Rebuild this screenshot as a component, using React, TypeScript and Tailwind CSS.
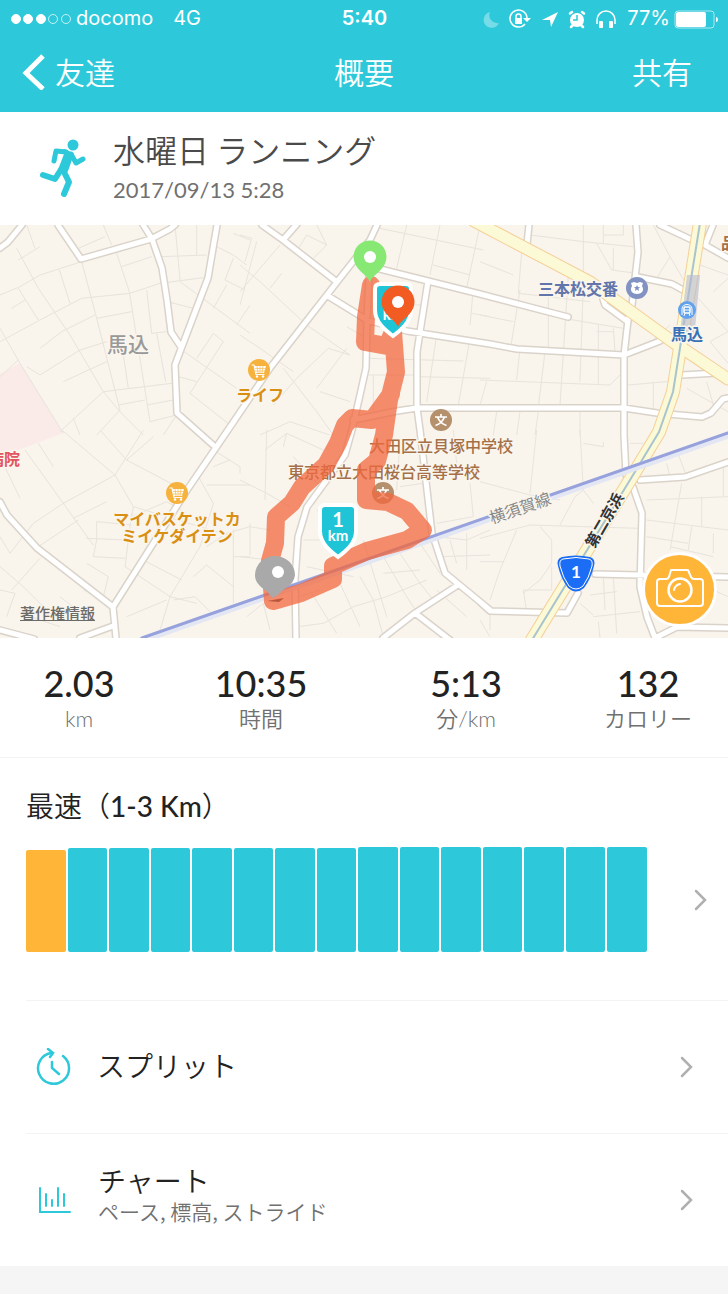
import React from "react";

const latin = "font-[Lato,'Noto_Sans_CJK_JP',sans-serif]";

const stats: { value: string; unit: string }[] = [
  { value: "2.03", unit: "km" },
  { value: "10:35", unit: "時間" },
  { value: "5:13", unit: "分/km" },
  { value: "132", unit: "カロリー" },
];

const paceBars = [
  102, 104, 104, 104, 104, 104, 104, 104, 105, 105, 105, 105, 105, 105, 105,
];

const roads = [
  "M22 0L8 17L0 23",
  "M58 0L81 34L151 14L170 4L175 0",
  "M142 -2L152 14L162 43L167 75L171 107L181 122",
  "M217 0L208 53L181 124L175 140L177 188L213 220",
  "M377 0L370 15L337 57L270 143L228 205L187 265L113 382L116 413",
  "M370 17L372 45",
  "M0 277L7 290L37 323L113 382",
  "M0 405L34 414",
  "M80 413L113 401",
  "M262 0L283 15L337 57",
  "M283 15L297 -1",
  "M328 71L367 95L407 106L490 119L517 124L624 130L660 116",
  "M372 42L428 56L480 69L568 92",
  "M369 50L367 95L366 143L360 170L352 205L345 230L307 282L298 312L295 355L296 413",
  "M428 56L420 107L417 127L417 183L420 205L432 308L445 348L490 385",
  "M383 413L415 388L458 360",
  "M415 388L450 415",
  "M353 195L397 186L417 183L624 183L657 188L702 192L711 188L723 174L728 173",
  "M636 0L638 27L632 80L628 95L624 130L624 210L626 250",
  "M603 74L605 80L628 97",
  "M527 19L529 0",
  "M660 0L692 15L705 20L728 33",
  "M713 0L705 20",
  "M638 52L672 59L683 65",
  "M682 150L717 148",
  "M640 255L685 252L728 237",
  "M633 262L642 288L640 362L647 392L655 413",
  "M595 349L728 352",
  "M480 377L490 386L567 388L578 368",
  "M655 413L677 402L728 403",
];

// back streets, one group of lines per map tile
const tiles: { x: number; y: number; d: string }[] = [
  {
    x: 0,
    y: 0,
    d: "M50 70L115 190L210 330L310 500L360 560L430 630M0 210L60 185L120 150L245 110M0 310L60 415L190 625M0 350L120 285L245 220L390 205L480 175L610 158M245 110L290 280L360 555L290 630M120 370L185 320L285 270M290 280L395 260M350 85L388 200L450 590M365 125L455 95M485 95L620 90M525 0L540 165M80 425L120 450L240 375L320 350M190 470L320 410M310 500L515 475M440 195L455 325L500 320M470 325L497 470M370 390L385 490M178 135L210 235M510 232L580 250M540 170L750 325M545 375L710 490M570 505L670 350L640 325M590 400L640 325M700 100L675 165L735 195M680 180L640 250M650 65L700 90L740 120M590 0V90M535 455L590 470M355 540L435 525M440 540L520 525M450 590L530 570L490 630M310 500L180 620M0 455L55 405M55 105L120 65M235 70L315 35M310 0L335 60M80 0L105 70M55 190L115 285M35 250L75 225M700 25L750 45M220 580L240 630M570 505L690 600M750 240L710 300",
  },
  {
    x: 240,
    y: 0,
    d: "M0 120L60 170L200 300L330 390M0 330L60 370L160 440M50 50L0 240M0 30L35 40L15 110M90 190L125 145M170 80L200 30L260 60M230 0L260 60L210 110M500 0L470 130M600 0L570 150M420 10L730 75M580 120L690 150M720 0L680 190M700 190L690 300M695 265L750 275M380 400L670 408M530 455L750 460M385 450H530M690 340L655 540M590 330L560 530M170 460L265 370L330 390M130 430L230 560L280 630M100 540L170 460M320 370L230 490M320 305L380 340M60 630L150 590L270 630M500 240H560M400 450V560M0 200L120 60M240 500L330 530",
  },
  {
    x: 480,
    y: 0,
    d: "M0 110L100 150M370 0V55M310 0V170L300 470M150 30L310 50L460 65M350 55L395 135L470 145M400 70V135M120 195L90 380M125 80L115 205L330 230M205 180V370M265 150L240 540M250 280L430 310M355 300V480M0 465L390 480L430 440M120 370L110 465M195 380L175 545M520 0L570 95L620 180M570 95L530 160M0 270L100 290M350 320H400M400 310L405 380M445 480L560 470L660 450M520 470V560M300 560V630M175 560L165 630M120 560L110 630M50 560L40 630M660 120L744 150M655 220L744 320L690 350L744 415M680 470L700 540M620 490L744 560M370 30H430V0M20 470L0 540M570 300L480 380M700 200L744 160",
  },
  {
    x: 0,
    y: 205,
    d: "M115 40L160 110M75 60L190 220L265 325L280 345M0 80L60 205M185 0L345 135L400 230L700 320M300 0L380 90L560 185M430 0L345 135L190 220L100 280M400 230L395 260L500 215L560 250M395 250L375 410L510 500L590 520M220 265L320 215M290 275V330L280 380L375 385M290 275L395 285M260 325L375 330M510 500L600 350L640 220L590 130M510 500L480 600M520 510L585 500L630 545M545 450L420 385M260 400L325 440L310 500L250 480M100 360L235 270M0 320L30 370L100 280M35 480L120 385M0 480L45 490L20 560M0 410L70 470L150 550M580 440L620 405L700 470M700 300V520M700 380H750M620 165H750M640 60L720 110V130M620 350L680 310L750 290M640 110L690 90M60 550L180 590M180 500L230 540M380 560L500 510M380 90L460 20",
  },
  {
    x: 240,
    y: 205,
    d: "M0 150L80 190L150 230M80 0L75 210M75 60L140 10L250 60M140 10L130 50M160 80L250 180M0 380L90 390M30 280V375M30 290L90 300M230 240L300 260M190 330H330M200 410L340 440M370 330L440 560M430 380L500 500L560 590M480 370L540 460L580 510M540 340L600 430M300 460L360 590M215 490L290 610M175 590L250 580L340 530L440 500M360 440L400 510L430 620M430 430L540 420M440 500L560 450M590 320L680 330L750 300M680 310V420M600 380L750 375M630 330L650 400M480 30L470 180M480 170L550 160M340 240L330 340M640 0L650 100M690 160L700 260L590 280M90 600L70 520L20 560M240 480L175 500M590 480L680 560",
  },
  {
    x: 480,
    y: 205,
    d: "M170 0L150 190M0 155L150 195L240 210M300 0L310 180L340 220M310 40L370 50V35M310 180L285 200L240 285M0 325L150 285L475 295M110 300L60 420L30 510M180 290L215 330V400L180 450L130 490M0 395H70M130 480L215 480V410M130 480L140 545M370 440L375 540M400 440L410 610M330 495L410 485M340 560L480 545M300 520L340 555M500 210L744 200M500 270L744 300M605 160L570 360M665 200V290M570 350L700 380M635 290L625 360M500 320L625 340M700 310V370M730 100V200M445 50L430 120M450 40H490M560 100L570 140M700 480L744 500M590 60L620 140M0 570L30 620M355 575L360 625M210 560L180 625M30 550V600",
  },
];

const highway = "M700 -2L680 123L673 167L659 207L630 255L532 415";
const avenue = "M474 -4L590 57L673 117L728 154";

const track =
  "M371 60L366 92L365 117L387 121L393 107L396 147L389 175L384 210L377 236L366 245L366 275L388 277L407 286L423 305L407 315L367 326L333 341L333 354L301 368L273 376L270 336L275 318L276 292L292 278L302 262L326 240L338 218L345 200L352 193L372 195L391 169";

const Halo: React.FC<React.SVGProps<SVGTextElement>> = (props) => (
  <text
    textAnchor="middle"
    stroke="#faf6ee"
    strokeWidth="3"
    strokeLinejoin="round"
    paintOrder="stroke"
    {...props}
  />
);

const Cart = ({ x, y }: { x: number; y: number }) => (
  <g transform={`translate(${x} ${y})`}>
    <circle r="11" fill="#f6b23c" />
    <path d="M-5 -4H7L5 3H-3Z" fill="#fff" />
    <path
      d="M-7 -5H-5L-3 4.500H5"
      stroke="#fff"
      strokeWidth="1.200"
      fill="none"
      strokeLinecap="round"
    />
    <path
      d="M-2 -4L-1 3M1 -4V3M4 -4L3 3M-4 -1.500H6M-4 1H6"
      stroke="#f6b23c"
      strokeWidth=".6"
    />
    <circle cx="-2" cy="6.500" r="1.200" fill="#fff" />
    <circle cx="4" cy="6.500" r="1.200" fill="#fff" />
  </g>
);

const School = ({ x, y }: { x: number; y: number }) => (
  <g transform={`translate(${x} ${y})`}>
    <circle r="11" fill="#b5906c" />
    <path
      d="M0 -6V-3M-6 -3H6M-3.500 -3C-2 1 1 4 5.500 5.500M3.500 -3C2 1 -1 4 -5.500 5.500"
      stroke="#fff"
      strokeWidth="1.700"
      fill="none"
    />
  </g>
);

const Pin = ({ x, y, fill }: { x: number; y: number; fill: string }) => (
  <g transform={`translate(${x} ${y})`}>
    <path
      d="M0 25C-3 17 -16 13 -16.500 0A16.500 16.500 0 0 1 16.500 0C16 13 3 17 0 25Z"
      fill={fill}
    />
    <circle r="6" fill="#fff" />
  </g>
);

const KmShield = ({ x, y }: { x: number; y: number }) => (
  <g transform={`translate(${x} ${y})`}>
    <path
      d="M-13 -26H13Q18 -26 18 -21V0C18 12 8 20 0 26C-8 20 -18 12 -18 0V-21Q-18 -26 -13 -26Z"
      fill="#1fc5d6"
      stroke="#fff"
      strokeWidth="4"
    />
    <text textAnchor="middle" fill="#fff" fontWeight="700">
      <tspan x="0" y="-4" fontSize="20">
        1
      </tspan>
      <tspan x="0" y="10" fontSize="15">
        km
      </tspan>
    </text>
  </g>
);

const RouteMap = () => (
  <div className="relative">
    <svg
      viewBox="0 0 728 413"
      className={`block h-auto w-full bg-[#f9f4ec] ${latin}`}
      role="img"
      aria-label="ランニングルート"
    >
      <path d="M0 149L20 138L63 208L0 232Z" fill="#fbebe8" />
      {tiles.map((tile) => (
        <svg
          key={`${tile.x}-${tile.y}`}
          x={tile.x}
          y={tile.y}
          width="250"
          height="210"
          viewBox="0 0 750 630"
        >
          <path d={tile.d} fill="none" stroke="#e7e4dd" strokeWidth="3" />
        </svg>
      ))}
      <g fill="none" strokeLinejoin="round" strokeLinecap="round">
        <path d={roads.join("")} stroke="#dad3ca" strokeWidth="8" />
        <path d={roads.join("")} stroke="#fff" strokeWidth="5" />
        <path d={avenue} stroke="#f5cf98" strokeWidth="13" />
        <path d={highway} stroke="#f5cf98" strokeWidth="14" />
        <path d={avenue} stroke="#fcfad6" strokeWidth="11" />
        <path d={highway} stroke="#fcfad6" strokeWidth="12" />
        <path d={highway} stroke="#a9c3cf" strokeWidth="2" />
        <path d="M142 415L728 210" stroke="#e3e7f4" strokeWidth="7" />
        <path d="M142 413L728 208" stroke="#97a1dc" strokeWidth="3" />
      </g>
      <path d="M687 50H700L694 115H679Z" fill="#b5b9cf" opacity=".6" />

      <g fontWeight="700" fontSize="16">
        <Halo x="128" y="127" fontSize="21" fontWeight="500" fill="#999">
          馬込
        </Halo>
        <Halo x="260" y="176" fill="#d98f13">
          ライフ
        </Halo>
        <Halo x="177" y="300" fill="#d98f13">
          マイバスケットカ
        </Halo>
        <Halo x="177" y="317" fill="#d98f13">
          ミイケダイテン
        </Halo>
        <Halo x="578" y="70" fill="#6275ab">
          三本松交番
        </Halo>
        <Halo x="687" y="115" fill="#3a70b5">
          馬込
        </Halo>
        <Halo x="-12" y="240" textAnchor="start" fill="#e25560">
          病院
        </Halo>
        <Halo x="721" y="24" textAnchor="start" fill="#a57048">
          品
        </Halo>
        <Halo
          x="520"
          y="289"
          fontWeight="400"
          fill="#888"
          transform="rotate(-19 520 283)"
        >
          横須賀線
        </Halo>
        <Halo x="604" y="301" fontSize="15" fill="#333" transform="rotate(-60 604 295)">
          第二京浜
        </Halo>
        <Halo x="441" y="227" fontWeight="500" fill="#a57048">
          大田区立貝塚中学校
        </Halo>
        <Halo x="384" y="253" fontWeight="500" fill="#a57048">
          東京都立大田桜台高等学校
        </Halo>
      </g>
      <Cart x={259} y={145} />
      <Cart x={177} y={268} />
      <School x={441} y={195} />
      <School x={383} y={268} />

      <g transform="translate(637 63)">
        <circle r="11" fill="#8292c2" />
        <path
          d="M-6 -5L-3 -6L0 -5L3 -6L6 -5L5 -2C8 3 4 6 0 6C-4 6 -8 3 -5 -2Z"
          fill="#fff"
        />
        <path
          d="M0 -3L1 -1H3L1.500 .5L2 3L0 1.500L-2 3L-1.500 .5L-3 -1H-1Z"
          fill="#8292c2"
        />
      </g>
      <g transform="translate(687 85)" fill="none" stroke="#fff">
        <circle r="9" fill="#62a2ec" stroke="none" />
        <path d="M-5 5V-1C-5 -7 5 -7 5 -1V5" />
        <rect x="-3" y="-3" width="6" height="6" rx="1" strokeWidth="1.500" />
        <path d="M-3 0H3M-2 3L-3 6M2 3L3 6" />
      </g>
      <g transform="translate(576 349)">
        <path
          d="M-14 -17Q0 -20 14 -17Q20 -15 18 -8Q15 5 8 14Q0 21 -8 14Q-15 5 -18 -8Q-20 -15 -14 -17Z"
          fill="#1b6df5"
        />
        <path
          d="M-13 -15Q0 -18 13 -15Q17 -14 16 -8Q13 4 7 12Q0 18 -7 12Q-13 4 -16 -8Q-17 -14 -13 -15Z"
          fill="none"
          stroke="#fff"
        />
        <text y="4" textAnchor="middle" fill="#fff" fontSize="17" fontWeight="700">
          1
        </text>
      </g>

      <path
        d={track}
        fill="none"
        stroke="#f1683f"
        strokeOpacity=".75"
        strokeWidth="18"
        strokeLinejoin="round"
        strokeLinecap="round"
      />

      <Pin x={370} y={32} fill="#88e874" />
      <KmShield x={393} y={85} />
      <Pin x={398} y={77} fill="#f25c22" />
      <KmShield x={338} y={306} />
      <g>
        <path d="M267 376L284 373L279 377Z" fill="#b9573c" />
        <path
          d="M255 350A20 19 0 0 1 295 350C294 360 284 363 278 370L272 373C268 364 255 362 255 350Z"
          fill="#a9a9a9"
        />
        <circle cx="278" cy="347" r="6" fill="#fff" />
      </g>
    </svg>
    <a
      href="#legal"
      className="absolute bottom-3.5 left-5 text-[15px] leading-[22px] font-medium text-[#6b6b68] underline"
    >
      著作権情報
    </a>
    <button
      type="button"
      aria-label="写真を撮る"
      className="absolute right-[11px] bottom-[11px] flex size-[75px] cursor-pointer items-center justify-center rounded-full border-[3px] border-white bg-[#ffb538]"
    >
      <svg
        width="50"
        height="42"
        viewBox="0 0 50 42"
        fill="none"
        stroke="#fff"
        strokeWidth="2"
        strokeLinejoin="round"
      >
        <path d="M5 10H11Q13 10 14 8L16 1H33L36 8Q37 10 39 10H45Q48 10 48 13V34Q48 37 45 37H5Q2 37 2 34V13Q2 10 5 10Z" />
        <circle cx="25" cy="21" r="11.500" strokeWidth="2.500" />
        <path d="M19 21Q20 16 25 15" strokeLinecap="round" />
      </svg>
    </button>
  </div>
);

const StatusBar = () => (
  <div className="grid grid-cols-[1fr_auto_1fr] items-center pr-2.5 pl-[11px] font-[Inter,sans-serif] text-[20px] leading-[37px]">
    <div className="flex items-center">
      <svg width="60" height="12" viewBox="0 0 60 12" fill="none" stroke="#fff">
        <g fill="#fff">
          <circle cx="5" cy="6" r="4.500" />
          <circle cx="17" cy="6" r="4.500" />
          <circle cx="30" cy="6" r="4.500" />
        </g>
        <circle cx="42" cy="6" r="4.500" strokeOpacity=".7" />
        <circle cx="55" cy="6" r="4.500" strokeOpacity=".7" />
      </svg>
      <span className="ml-[5px]">docomo</span>
      <span className="ml-5">4G</span>
    </div>
    <div className="font-semibold">5:40</div>
    <div className="flex items-center justify-end">
      <svg width="138" height="22" viewBox="0 0 138 22" fill="#fff" className="mr-2">
        <path
          d="M9 4A8 8 0 1 0 18 15A8 8 0 0 1 9 4Z"
          fillOpacity=".35"
        />
        <g fill="none" stroke="#fff" strokeWidth="1.500">
          <path d="M44 16A8.500 8.500 0 1 1 46 10" />
          <path d="M35 10V8.500A2 2 0 0 1 40 8.500V10" />
        </g>
        <path d="M34 10H41V16H34ZM42 10H50L46 14Z" />
        <path d="M61 12L77 4L70 19L69 12Z" />
        <circle cx="96" cy="12" r="7" />
        <path
          d="M89 5.500L91 4M103 5.500L101 4M92 17L90 19M100 17L102 19"
          stroke="#fff"
          strokeWidth="2.500"
          strokeLinecap="round"
        />
        <path d="M96 7V12H92" fill="none" stroke="#2dc9da" strokeWidth="1.500" />
        <path
          d="M116 16V12A9 9 0 0 1 134 12V16"
          fill="none"
          stroke="#fff"
          strokeWidth="1.500"
        />
        <rect x="118" y="13" width="4" height="7" rx="1" />
        <rect x="128" y="13" width="4" height="7" rx="1" />
      </svg>
      <span>77%</span>
      <svg width="44" height="20" viewBox="0 0 44 20" className="ml-1">
        <rect
          x="1"
          y="2"
          width="39"
          height="17"
          rx="3"
          fill="none"
          stroke="#fff"
          strokeOpacity=".6"
        />
        <rect x="2" y="3" width="30" height="15" rx="2" fill="#fff" />
        <path d="M42 8Q44 8 44 10.500Q44 13 42 13Z" fill="#fff" />
      </svg>
    </div>
  </div>
);

const Chevron = () => (
  <svg
    width="14"
    height="22"
    viewBox="0 0 14 22"
    fill="none"
    stroke="#b0b0b0"
    strokeWidth="2.500"
    strokeLinecap="round"
    className="shrink-0"
  >
    <path d="M2 2L11 11L2 20" />
  </svg>
);

const Runner = () => (
  <svg
    width="48"
    height="60"
    viewBox="0 0 48 60"
    fill="none"
    stroke="#2dc9da"
    strokeWidth="5"
    strokeLinecap="round"
    strokeLinejoin="round"
  >
    <circle cx="33" cy="6" r="5.500" fill="#2dc9da" stroke="none" />
    <path d="M14 22L16 12L26 13" />
    <path d="M31 15L36 24L43 20" />
    <path
      d="M24 11L33 15L27 32L19 31L25 15Z"
      fill="#2dc9da"
      strokeWidth="2"
    />
    <path d="M22 29L15 40L3 36" strokeWidth="6" />
    <path d="M23 31L29 43L24 55" strokeWidth="6" />
  </svg>
);

const App: React.FC = () => {
  return (
    <div className="flex min-h-screen flex-col bg-white font-['Noto_Sans_CJK_JP',sans-serif] text-[#222]">
      <header className="bg-[#2dc9da] pb-[7px] text-white">
        <StatusBar />
        <nav className="grid grid-cols-[1fr_auto_1fr] items-center px-[22px] text-[30px] leading-[68px] font-[350]">
          <button
            type="button"
            className="flex cursor-pointer items-center gap-2.5 justify-self-start"
          >
            <svg
              width="23"
              height="38"
              viewBox="0 0 23 38"
              fill="none"
              stroke="#fff"
              strokeWidth="5"
            >
              <path d="M21 4L4 21L21 37" />
            </svg>
            友達
          </button>
          <h1>概要</h1>
          <button
            type="button"
            className="cursor-pointer justify-self-end pr-3.5"
          >
            共有
          </button>
        </nav>
      </header>

      <section className="flex items-end gap-[25px] pt-4 pb-[19px] pl-10">
        <div className="pb-[7px]">
          <Runner />
        </div>
        <div>
          <h2 className="text-[32px] leading-[42px] font-[350] text-[#4a4a4a]">
            水曜日 ランニング
          </h2>
          <p className={`pt-1 text-[22px] leading-8 text-[#707070] ${latin}`}>
            2017/09/13 5:28
          </p>
        </div>
      </section>

      <RouteMap />

      <section className="grid grid-cols-[158fr_206fr_204fr_160fr] border-b border-[#f3f3f3] pt-6 pb-6 text-center">
        {stats.map((item) => (
          <div key={item.unit}>
            <div className={`text-[36px] leading-[43px] font-medium ${latin}`}>
              {item.value}
            </div>
            <div
              className={`text-[22px] leading-[28px] font-[350] text-[#707070] ${latin}`}
            >
              {item.unit}
            </div>
          </div>
        ))}
      </section>

      <section className="pt-7 pl-[26px]">
        <h3 className={`text-[28px] leading-10 font-medium ${latin}`}>
          <span className="font-[350]">最速（</span>1-3 Km
          <span className="font-[350]">）</span>
        </h3>
        <button
          type="button"
          aria-label="最速の詳細"
          className="mt-[21px] flex w-full cursor-pointer items-center gap-[47px] pr-5 pb-12"
        >
          <div className="flex flex-1 items-end gap-0.5">
            {paceBars.map((height, index) => (
              <div
                key={index}
                style={{ height }}
                className={`flex-1 rounded-xs ${index === 0 ? "bg-[#ffb538]" : "bg-[#2dc9da]"}`}
              ></div>
            ))}
          </div>
          <Chevron />
        </button>
      </section>

      <button
        type="button"
        className="ml-[26px] flex h-[133px] cursor-pointer items-center border-t border-[#f3f3f3] pr-[34px] pl-2.5 text-left"
      >
        <svg
          width="36"
          height="38"
          viewBox="0 0 36 38"
          fill="none"
          stroke="#2dc9da"
          strokeWidth="2.500"
          strokeLinecap="round"
          className="shrink-0"
        >
          <path d="M27 8A15.500 15.500 0 1 1 15 5" />
          <path d="M12 1L17 5L14 9M16 14V20L23 26" />
        </svg>
        <span className="ml-[25px] flex-1 pb-1 text-[28px] leading-10 font-[350]">
          スプリット
        </span>
        <Chevron />
      </button>

      <button
        type="button"
        className="ml-[26px] flex h-[133px] cursor-pointer items-center border-t border-[#f3f3f3] pr-[34px] pl-2.5 text-left"
      >
        <svg
          width="36"
          height="30"
          viewBox="0 0 36 30"
          fill="none"
          stroke="#2dc9da"
          strokeWidth="2"
          strokeLinecap="round"
          className="shrink-0"
        >
          <path d="M4 3V27H34" />
          <path d="M10 9V21M16 15V21M22 3V21M28 9V21" />
        </svg>
        <span className="ml-[26px] flex-1 pb-3 font-[350]">
          <span className="block text-[28px] leading-[34px]">チャート</span>
          <span className="block text-[21px] leading-[28px] text-[#707070]">
            ペース, 標高, ストライド
          </span>
        </span>
        <Chevron />
      </button>

      <footer className="min-h-6 flex-1 bg-[#f5f5f5]"></footer>
    </div>
  );
};

export default App;
